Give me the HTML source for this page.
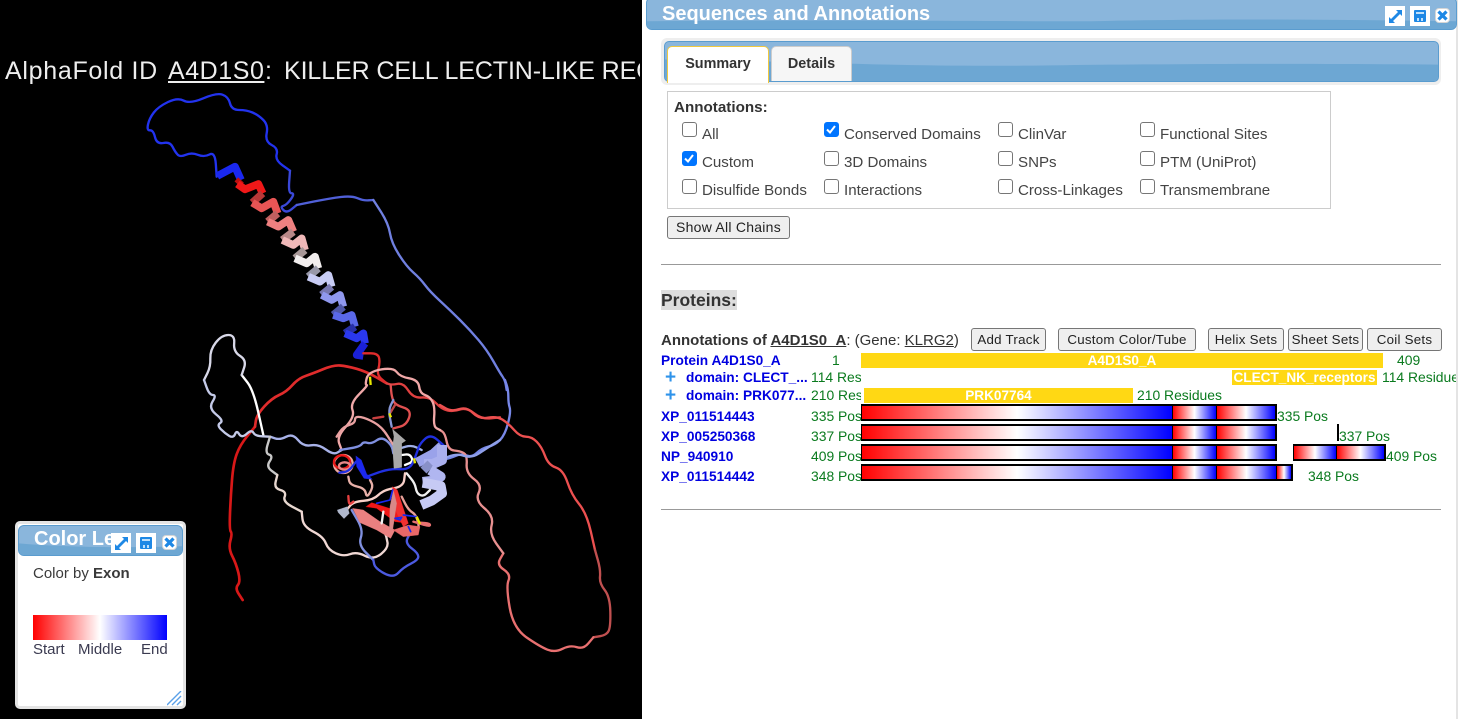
<!DOCTYPE html>
<html><head><meta charset="utf-8"><style>
html,body{margin:0;padding:0;width:1460px;height:719px;overflow:hidden;background:#000;font-family:"Liberation Sans",sans-serif;color:#333}
.a{position:absolute;white-space:nowrap}
.bar{position:absolute;background:#8ab6dc;border:1px solid #5a9ccf;overflow:hidden;box-sizing:border-box}
.bar svg{position:absolute;left:0;top:0;width:100%;height:100%}
.ck{position:absolute;width:15px;height:15px;box-sizing:border-box;border:1.5px solid #767676;border-radius:3px;background:#fff}
.ck.on{background:#0075ff;border-color:#0075ff}
.ck.on svg{position:absolute;left:0;top:0}
.l{position:absolute;font-size:15.1px;color:#444;white-space:nowrap;line-height:18px}
.btn{position:absolute;box-sizing:border-box;border:1px solid #767676;border-radius:3px;background:#efefef;font-size:13.33px;letter-spacing:.25px;color:#222;text-align:center;height:23px;line-height:21px;white-space:nowrap}
.blue{position:absolute;color:#0000e0;font-weight:bold;font-size:13.7px;line-height:16px;white-space:nowrap}
.gr{position:absolute;color:#0a7a1e;font-size:13.9px;line-height:16px;white-space:nowrap;overflow:hidden}
.y{position:absolute;background:#ffd814;color:#fff;font-weight:bold;font-size:13.6px;text-align:center;line-height:15px;height:15px;white-space:nowrap;overflow:hidden}
.t{position:absolute;box-sizing:border-box;border:2px solid #000;height:17px;border-left-width:1px}
.g1{background:linear-gradient(90deg,#f00,#fff 50%,#00f)}
.ic{position:absolute;width:20px;height:20px;background:#fff}
.ic svg,.cl svg{position:absolute;left:0;top:0}
.cl{position:absolute;width:15px;height:15px;background:#fff;border-radius:4px;border:1px solid #d5d5d5;box-sizing:border-box}
.plus{position:absolute;color:#2f93ea;font-weight:bold;font-size:19px;line-height:20px}
.tt{position:absolute;top:56px;color:#eee;font-size:25px;line-height:30px;white-space:nowrap}
</style></head><body>

<div class="tt" style="left:5px;letter-spacing:.7px">AlphaFold ID</div>
<div class="tt" style="left:168px;letter-spacing:.55px;text-decoration:underline">A4D1S0</div>
<div class="tt" style="left:265px">:</div>
<div class="tt" style="left:284px;width:356px;overflow:hidden;letter-spacing:-.1px">KILLER CELL LECTIN-LIKE RECEPTOR</div>

<svg class="a" style="left:0;top:0" width="642" height="719" fill="none" stroke-linejoin="round" stroke-linecap="round">
<g transform="translate(130,80) scale(.33333)" stroke-width="7">
<path stroke="#2233ee" d="M260 290L255 215 222 232 185 217 150 232 135 215 120 185 80 193 70 150 50 152 58 115 85 80 143 52 180 72 260 38 295 50 305 90 350 90 385 105 415 135 405 185 445 205 435 240 480 272"/>
<path stroke="#3a48d8" d="M480 272L475 340 495 340 470 375 450 380 470 400 500 375"/>
<path stroke="#5060d8" d="M500 375L600 355 665 347 700 362 730 360"/>
<path stroke="#7080e0" d="M730 360L775 430 785 490 830 560 870 595 900 635 960 690 1020 750 1071 810 1110 879 1125 900 1130 930"/>
<g class="h" stroke-width="23" stroke-linecap="butt">
<path stroke="#1a28f0" d="M262 288L315 260 333 300"/>
<path stroke="#c01010" d="M333 300L322 312"/>
<path stroke="#f01818" d="M322 312L345 328 385 312 398 340"/>
<path stroke="#b83838" d="M398 340L367 368"/>
<path stroke="#e85555" d="M367 368L395 385 430 365 443 400"/>
<path stroke="#c06060" d="M443 400L413 425"/>
<path stroke="#ee8080" d="M413 425L445 440 475 420 490 455"/>
<path stroke="#b88888" d="M490 455L457 480"/>
<path stroke="#f0b8b8" d="M457 480L490 495 515 475 525 510"/>
<path stroke="#a89898" d="M525 510L495 535"/>
<path stroke="#f2eeee" d="M495 535L530 550 555 530 565 565"/>
<path stroke="#9898a8" d="M565 565L535 590"/>
<path stroke="#c8ccf4" d="M535 590L570 605 595 585 605 620"/>
<path stroke="#7878b0" d="M605 620L575 645"/>
<path stroke="#9098ee" d="M575 645L605 660 630 645 640 680"/>
<path stroke="#5058a8" d="M640 680L610 705"/>
<path stroke="#5a68e8" d="M610 705L640 715 665 705 675 740"/>
<path stroke="#2830a8" d="M675 740L645 760"/>
<path stroke="#2a38ee" d="M645 760L680 775 700 760 705 790"/>
<path stroke="#1a20d8" d="M705 790L680 825 700 828"/>
</g>
</g>
<g transform="translate(200,330) scale(.33333)" stroke-width="7">
<path stroke="#d81818" stroke-width="8" d="M128 810L105 775 122 755 108 700 85 655 97 610 88 600 92 500 100 400 120 345 165 290"/>
<path stroke="#e02c2c" stroke-width="8" d="M165 290L170 255 215 205 260 185 295 145 340 130 400 105 440 108 500 125 560 160"/>
<path stroke="#e02c2c" d="M490 70L535 70 540 100 530 135 560 160"/>
<path stroke="#e04040" d="M560 160L575 165 610 158 640 205 690 200 725 238 760 245 800 232 845 268 900 262"/>
<path stroke="#e05050" d="M572 165L575 200 585 225 635 240 620 285 580 295"/>
<path stroke="#c04848" d="M585 225L570 250"/>
</g>
<g transform="translate(440,380) scale(.33333)" stroke-width="7">
<path stroke="#7888e8" d="M195 0L205 30 205 70 213 95 195 165 165 195 125 205 95 233 65 220 30 235 0 240"/>
<path stroke="#ec5050" d="M0 75L35 95 80 80 118 118 170 108 205 130 240 170 275 170 305 200 325 255 370 270 395 345 440 400 465 510"/>
<path stroke="#c05050" d="M465 510L482 570 478 610 510 650 512 740 500 765 460 772"/>
<path stroke="#e87070" d="M460 772L430 808 390 795 345 818 300 800 220 745 198 620 213 583 170 555 190 520"/>
<path stroke="#e89090" d="M190 520L148 462 162 408 105 362 127 315 78 280 82 225 60 213 25 210 15 160 0 150"/>
</g>
<g transform="translate(200,330) scale(.33333)" stroke-width="7">
<path stroke="#f0a8a8" d="M720 300L700 290 705 230 690 200 660 190 655 150 600 140 580 112 505 125 495 165 505 165 450 220 465 260 410 320 425 360"/>
<path stroke="#fff" d="M190 315L160 180 125 135"/>
<path stroke="#d8d8e8" d="M125 135L140 90 100 65 105 15 65 15 30 60 32 110 12 150"/>
<path stroke="#c4cae8" d="M12 150L28 195 50 195 25 235 72 272 50 285 75 310 100 325 110 300 125 325 155 298 165 318 210 320"/>
<path stroke="#a8b2e8" d="M210 320L240 330 278 310 310 350 355 342 400 375 425 360"/>
<path stroke="#c8c8c8" d="M210 320L195 370 220 378 198 410 232 435"/>
<path stroke="#e8d8d0" d="M232 435L222 475 260 485 248 515 305 545"/>
<path stroke="#f0d8d4" d="M305 545L310 590 370 620 385 660 430 680 470 665 520 690 565 655 560 620 545 585"/>
<path stroke="#8090e0" d="M455 540L490 600 475 645 520 690"/>
<path stroke="#4c5ae0" d="M520 690L525 715 580 745 610 712 655 690 655 670 615 640 630 610"/>
<path stroke="#8fa0e8" d="M720 390L770 370 815 385 860 355 900 330"/>
<path stroke="#8090e0" d="M420 360L480 350 490 335 515 342 545 320 575 345 580 370"/>
<path stroke="#e8a0a0" d="M410 320L430 290 465 280 465 258 500 265 545 290 580 345"/>
<path stroke="#8898d8" d="M580 210L565 240 575 290"/>
<path stroke="#c84040" d="M520 265L550 260"/>
<path stroke="#e8b0a8" d="M445 440L450 465 495 475 500 505 520 470 510 450"/>
<path stroke="#f0f0f0" d="M620 430L645 460 650 490 670 500 690 480"/>
<path stroke="#f8d0c8" d="M615 430L610 470 550 480 520 510 460 515 440 540"/>
<path stroke="#e8a098" d="M605 500L625 540 650 555 660 610 600 605"/>
<path stroke="#e87070" d="M640 575L690 590 690 580 660 578"/>
<path stroke="#fff" d="M605 375L630 372 640 395 615 405"/>
<path stroke="#a0b0e8" d="M600 355L635 345 665 360"/>
<ellipse cx="430" cy="402" rx="28" ry="27" stroke="#f0a8a0"/>
<ellipse cx="426" cy="396" rx="24" ry="20" stroke="#e81818" stroke-width="7"/>
<ellipse cx="434" cy="408" rx="17" ry="11" stroke="#e88888"/>
<path stroke="#2030e0" d="M418 428L445 425 468 395"/>
<path stroke="#2030e0" stroke-width="7" d="M500 440L570 415 630 420 650 370 660 340 692 312 730 345"/>
<path stroke="#1c28ee" stroke-width="1" fill="#1c28ee" d="M468 378L484 390 500 432 517 448 492 445 470 410Z"/>
<path stroke="#b8b8b8" stroke-width="1" fill="#a8a8a8" d="M578 298L617 332 605 340 605 412 582 415 578 350 582 320Z"/>
<g class="h" stroke-width="30" stroke-linecap="butt">
<path stroke="#9aa2ea" d="M652 398L700 372 726 348"/>
<path stroke="#aab0ee" d="M726 345L726 390 698 402 672 402"/>
<path stroke="#8890c8" d="M672 402L690 420"/>
<path stroke="#b0b6f0" d="M690 420L722 440 700 452 668 456"/>
<path stroke="#c6caf4" d="M668 458L722 468 726 490 695 512 664 525"/>
</g>
<path stroke="#a0a8c0" stroke-width="1" fill="#b0b8cc" d="M412 540L442 530 448 550 432 566 415 548Z"/>
<path stroke="#e87878" stroke-width="1" fill="#ea8080" d="M458 535L490 540 540 575 585 600 572 625 530 600 480 578Z"/>
<path stroke="#f01010" stroke-width="1" fill="#f01818" d="M498 530L515 518 600 545 625 580 585 575 530 535Z"/>
<path stroke="#f02020" stroke-width="1" fill="#f03030" d="M578 470L592 480 625 580 610 590 580 530Z"/>
<path stroke="#d88080" stroke-width="1" fill="#d88888" d="M580 480L590 520 578 600 568 600 570 530Z"/>
<path stroke="#e86060" stroke-width="1" fill="#e86868" d="M580 600L625 585 660 590 655 615 610 620Z"/>
<path stroke="#1828ee" stroke-width="5" d="M578 480L570 510 530 520M585 565L605 562 600 570ZM610 555L650 560M625 590L632 605"/>
<path stroke="#e84040" d="M445 498L447 525 460 515"/>
<path stroke="#f0f0f0" d="M545 580L550 545"/>
<g stroke="#e8e800" stroke-width="7" stroke-linecap="butt">
<path d="M510 140M512 165L510 140"/><path d="M568 250M573 262L568 250"/><path d="M642 385M645 400L642 385"/><path d="M650 560M660 582L650 560"/>
</g>
</g>
</svg>
<script>
document.querySelectorAll('svg g path').forEach(function(p){
  if(p.closest('.h'))return;
  var d=p.getAttribute('d');
  if(!/^M[\d. ]+L[\d. ]+$/.test(d))return;
  var n=d.replace(/[ML]/g,' ').trim().split(/\s+/).map(Number);
  if(n.length<6)return;
  var o='M'+n[0]+' '+n[1];
  o+=' L'+((n[0]+n[2])/2)+' '+((n[1]+n[3])/2);
  for(var i=2;i<n.length-2;i+=2){
    o+=' Q'+n[i]+' '+n[i+1]+' '+((n[i]+n[i+2])/2)+' '+((n[i+1]+n[i+3])/2);
  }
  o+=' L'+n[n.length-2]+' '+n[n.length-1];
  p.setAttribute('d',o);
});
</script>

<!-- color legend -->
<div class="a" style="left:15px;top:521px;width:171px;height:188px;box-sizing:border-box;background:#fff;border:3px solid #e4e4e4;border-radius:5px"></div>
<div class="bar" style="left:18px;top:525px;width:165px;height:31px;border-radius:6px"><svg viewBox="0 0 100 10" preserveAspectRatio="none"><path fill="#6da7d3" d="M0 6C30 7.5 70 7.5 100 7L100 10 0 10Z"/></svg></div>
<div class="a" style="left:34px;top:527px;color:#fff;font-weight:bold;font-size:20px;line-height:24px">Color Le...</div>
<div class="ic" style="left:111px;top:533px"><svg width="20" height="20"><path fill="#1e88e5" d="M11 4h6v6l-2-2-7 7 2 2H4v-6l2 2 7-7z"/></svg></div>
<div class="ic" style="left:136px;top:533px"><svg width="20" height="20"><path fill="#1e88e5" d="M4 5q0-1 1-1h10q1 0 1 1v10q0 1-1 1H5q-1 0-1-1z"/><path fill="#bfe0fb" d="M6 6h8v2H6zM7 12h2v3H7zM11 12h2v3h-2z"/></svg></div>
<div class="cl" style="left:162px;top:535px"><svg width="13" height="13"><path stroke="#1e88e5" stroke-width="3.2" d="M2.500 2.500l8 8M10.500 2.500l-8 8"/></svg></div>
<div class="a" style="left:33px;top:566px;font-size:15px;line-height:16px;color:#3a3a3a">Color by <b>Exon</b></div>
<div class="a" style="left:33px;top:615px;width:134px;height:25px;background:linear-gradient(90deg,#f00,#fff 50%,#00f)"></div>
<div class="a" style="left:33px;top:642px;font-size:15px;line-height:16px;color:#3a3a50">Start</div>
<div class="a" style="left:78px;top:642px;font-size:15px;line-height:16px;color:#3a3a50">Middle</div>
<div class="a" style="left:141px;top:642px;font-size:15px;line-height:16px;color:#3a3a50">End</div>
<svg class="a" style="left:167px;top:691px" width="15" height="15" stroke="#5aa0e8" stroke-width="1.4"><path d="M0 14L14 0M5 14L14 5M10 14L14 10"/></svg>

<!-- right panel -->
<div class="a" style="left:642px;top:0;width:818px;height:719px;background:#fff"></div>
<div class="a" style="left:1456px;top:0;width:2px;height:719px;background:#e4e4e4"></div>
<div class="bar" style="left:646px;top:-3px;width:811px;height:33px;border-radius:6px"><svg viewBox="0 0 100 10" preserveAspectRatio="none"><path fill="#6da7d3" d="M0 7.500C25 7 40 7.500 55 7.500C72 6.500 85 7 100 7.500L100 10 0 10Z"/></svg></div>
<div class="a" style="left:662px;top:2px;color:#fff;font-weight:bold;font-size:20px;line-height:24px">Sequences and Annotations</div>
<div class="ic" style="left:1385px;top:6px"><svg width="20" height="20"><path fill="#1e88e5" d="M11 4h6v6l-2-2-7 7 2 2H4v-6l2 2 7-7z"/></svg></div>
<div class="ic" style="left:1410px;top:6px"><svg width="20" height="20"><path fill="#1e88e5" d="M4 5q0-1 1-1h10q1 0 1 1v10q0 1-1 1H5q-1 0-1-1z"/><path fill="#bfe0fb" d="M6 6h8v2H6zM7 12h2v3H7zM11 12h2v3h-2z"/></svg></div>
<div class="cl" style="left:1435px;top:8px"><svg width="13" height="13"><path stroke="#1e88e5" stroke-width="3.2" d="M2.500 2.500l8 8M10.500 2.500l-8 8"/></svg></div>

<div class="a" style="left:661px;top:38px;width:780px;height:47px;background:#eee;border-radius:6px"></div>
<div class="bar" style="left:664px;top:41px;width:775px;height:41px;border-radius:5px"><svg viewBox="0 0 100 10" preserveAspectRatio="none"><path fill="#6da7d3" d="M0 4.500C20 5 30 6.500 50 6C70 5.500 85 5.500 100 5.800L100 10 0 10Z"/></svg></div>
<div class="a" style="left:667px;top:46px;width:102px;height:37px;box-sizing:border-box;background:#fff;border:1px solid #f0c940;border-bottom:none;border-radius:5px 5px 0 0;font-weight:bold;font-size:14.4px;line-height:35px;text-align:center;color:#333">Summary</div>
<div class="a" style="left:771px;top:46px;width:81px;height:35px;box-sizing:border-box;background:#f6f6f6;border:1px solid #ccc;border-bottom:none;border-radius:5px 5px 0 0;font-weight:bold;font-size:14.4px;line-height:34px;text-align:center;color:#333">Details</div>

<div class="a" style="left:667px;top:91px;width:664px;height:118px;box-sizing:border-box;border:1px solid #ccc"></div>
<div class="a" style="left:674px;top:99px;font-weight:bold;font-size:15.2px;line-height:18px">Annotations:</div>

<div class="ck" style="left:682px;top:122px"></div><div class="l" style="left:702px;top:126px">All</div>
<div class="ck on" style="left:824px;top:122px"><svg width="12" height="12"><path d="M2 6.500L5 9.500 10 3" stroke="#fff" stroke-width="2" fill="none"/></svg></div><div class="l" style="left:844px;top:126px">Conserved Domains</div>
<div class="ck" style="left:998px;top:122px"></div><div class="l" style="left:1018px;top:126px">ClinVar</div>
<div class="ck" style="left:1140px;top:122px"></div><div class="l" style="left:1160px;top:126px">Functional Sites</div>
<div class="ck on" style="left:682px;top:151px"><svg width="12" height="12"><path d="M2 6.500L5 9.500 10 3" stroke="#fff" stroke-width="2" fill="none"/></svg></div><div class="l" style="left:702px;top:154px">Custom</div>
<div class="ck" style="left:824px;top:151px"></div><div class="l" style="left:844px;top:154px">3D Domains</div>
<div class="ck" style="left:998px;top:151px"></div><div class="l" style="left:1018px;top:154px">SNPs</div>
<div class="ck" style="left:1140px;top:151px"></div><div class="l" style="left:1160px;top:154px">PTM (UniProt)</div>
<div class="ck" style="left:682px;top:179px"></div><div class="l" style="left:702px;top:182px">Disulfide Bonds</div>
<div class="ck" style="left:824px;top:179px"></div><div class="l" style="left:844px;top:182px">Interactions</div>
<div class="ck" style="left:998px;top:179px"></div><div class="l" style="left:1018px;top:182px">Cross-Linkages</div>
<div class="ck" style="left:1140px;top:179px"></div><div class="l" style="left:1160px;top:182px">Transmembrane</div>

<div class="btn" style="left:667px;top:216px;width:123px;font-size:14px">Show All Chains</div>
<div class="a" style="left:661px;top:264px;width:780px;height:1px;background:#999"></div>

<div class="a" style="left:661px;top:290px;height:20px;background:#ddd;font-weight:bold;font-size:17.5px;line-height:20px;color:#333">Proteins:</div>

<div class="a" style="left:661px;top:332px;font-size:15px;line-height:17px;color:#333"><b>Annotations of <u>A4D1S0_A</u></b>: (Gene: <u>KLRG2</u>)</div>
<div class="btn" style="left:971px;top:328px;width:75px">Add Track</div>
<div class="btn" style="left:1058px;top:328px;width:138px">Custom Color/Tube</div>
<div class="btn" style="left:1208px;top:328px;width:76px">Helix Sets</div>
<div class="btn" style="left:1288px;top:328px;width:75px">Sheet Sets</div>
<div class="btn" style="left:1367px;top:328px;width:75px">Coil Sets</div>

<div class="blue" style="left:661px;top:353px">Protein A4D1S0_A</div>
<div class="gr" style="left:832px;top:352px">1</div>
<div class="y" style="left:861px;top:353px;width:522px">A4D1S0_A</div>
<div class="gr" style="left:1397px;top:352px">409</div>

<div class="plus" style="left:665px;top:368px">+</div>
<div class="blue" style="left:686px;top:370px">domain: CLECT_...</div>
<div class="gr" style="left:811px;top:369px;width:50px">114 Res</div>
<div class="y" style="left:1232px;top:370px;width:145px">CLECT_NK_receptors</div>
<div class="gr" style="left:1382px;top:369px;width:74px">114 Residues</div>

<div class="plus" style="left:665px;top:386px">+</div>
<div class="blue" style="left:686px;top:388px">domain: PRK077...</div>
<div class="gr" style="left:811px;top:387px;width:50px">210 Res</div>
<div class="y" style="left:864px;top:388px;width:269px">PRK07764</div>
<div class="gr" style="left:1137px;top:387px">210 Residues</div>

<div class="blue" style="left:661px;top:409px">XP_011514443</div><div class="gr" style="left:811px;top:408px;width:50px">335 Pos</div>
<div class="t g1" style="left:861px;top:404px;width:313px"></div>
<div class="t g1" style="left:1172px;top:404px;width:46px"></div>
<div class="t g1" style="left:1216px;top:404px;width:61px"></div>
<div class="gr" style="left:1277px;top:408px">335 Pos</div>

<div class="blue" style="left:661px;top:429px">XP_005250368</div><div class="gr" style="left:811px;top:428px;width:50px">337 Pos</div>
<div class="t g1" style="left:861px;top:424px;width:313px"></div>
<div class="t g1" style="left:1172px;top:424px;width:46px"></div>
<div class="t g1" style="left:1216px;top:424px;width:61px"></div>
<div class="a" style="left:1337px;top:424px;width:2px;height:17px;background:#000"></div>
<div class="gr" style="left:1339px;top:428px">337 Pos</div>

<div class="blue" style="left:661px;top:449px">NP_940910</div><div class="gr" style="left:811px;top:448px;width:50px">409 Pos</div>
<div class="t g1" style="left:861px;top:444px;width:313px"></div>
<div class="t g1" style="left:1172px;top:444px;width:46px"></div>
<div class="t g1" style="left:1216px;top:444px;width:61px"></div>
<div class="t g1" style="left:1293px;top:444px;width:45px"></div>
<div class="t g1" style="left:1336px;top:444px;width:50px"></div>
<div class="gr" style="left:1386px;top:448px">409 Pos</div>

<div class="blue" style="left:661px;top:469px">XP_011514442</div><div class="gr" style="left:811px;top:468px;width:50px">348 Pos</div>
<div class="t g1" style="left:861px;top:464px;width:313px"></div>
<div class="t g1" style="left:1172px;top:464px;width:46px"></div>
<div class="t g1" style="left:1216px;top:464px;width:62px"></div>
<div class="t g1" style="left:1276px;top:464px;width:17px"></div>
<div class="gr" style="left:1308px;top:468px">348 Pos</div>

<div class="a" style="left:661px;top:509px;width:780px;height:1px;background:#999"></div>
</body></html>
